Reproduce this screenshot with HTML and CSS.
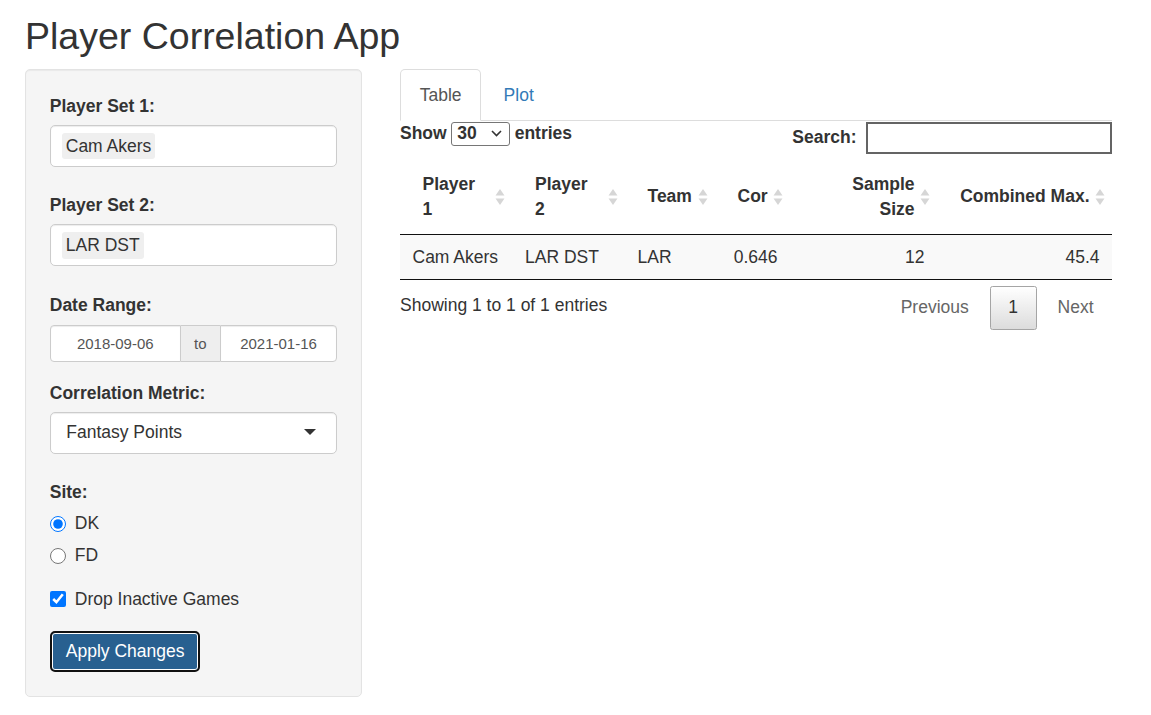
FILE: index.html
```html
<!DOCTYPE html>
<html lang="en">
<head>
<meta charset="utf-8">
<title>Player Correlation App</title>
<link rel="stylesheet" href="styles.css">
</head>
<body>
<div class="page">
  <h2 class="title">Player Correlation App</h2>
  <div class="layout">
    <aside class="well">
      <div class="group group-select">
        <label class="ctl-label">Player Set 1:</label>
        <div class="selectize"><span class="pill">Cam Akers</span></div>
      </div>
      <div class="group group-select group-select-last">
        <label class="ctl-label">Player Set 2:</label>
        <div class="selectize"><span class="pill">LAR DST</span></div>
      </div>
      <div class="group group-date">
        <label class="ctl-label">Date Range:</label>
        <div class="daterange">
          <div class="date-input date-first">2018-09-06</div>
          <div class="date-addon">to</div>
          <div class="date-input date-last">2021-01-16</div>
        </div>
      </div>
      <div class="group group-metric">
        <label class="ctl-label">Correlation Metric:</label>
        <div class="single-select"><span>Fantasy Points</span><span class="caret"></span></div>
      </div>
      <div class="group group-site">
        <label class="ctl-label">Site:</label>
        <label class="option-row"><input class="opt-input" type="radio" name="site" checked><span>DK</span></label>
        <label class="option-row option-second"><input class="opt-input" type="radio" name="site"><span>FD</span></label>
      </div>
      <div class="group group-check">
        <label class="option-row"><input class="opt-input" type="checkbox" checked><span>Drop Inactive Games</span></label>
      </div>
      <button class="apply-btn" type="button">Apply Changes</button>
    </aside>

    <main class="main">
      <ul class="tabs">
        <li class="tab tab-active">Table</li>
        <li class="tab tab-link">Plot</li>
      </ul>
      <div class="dt">
        <div class="dt-top">
          <div class="dt-length">
            <span>Show</span>
            <span class="len-select"><span>30</span><svg class="chev" width="11" height="7" viewBox="0 0 11 7"><path d="M1 1 L5.5 5.5 L10 1" fill="none" stroke="#333" stroke-width="1.6"/></svg></span>
            <span>entries</span>
          </div>
          <div class="dt-filter">
            <span>Search:</span>
            <span class="search-box"></span>
          </div>
        </div>
        <table class="dt-table">
          <colgroup>
            <col class="c1"><col class="c2"><col class="c3"><col class="c4"><col class="c5"><col class="c6">
          </colgroup>
          <thead>
            <tr>
              <th class="th-left">Player<br>1<svg class="sort" width="10" height="18" viewBox="0 0 10 18"><path d="M5 1 L9.5 7.5 H0.5 Z" fill="#d6d6d6"/><path d="M0.5 10.5 H9.5 L5 17 Z" fill="#d6d6d6"/></svg></th>
              <th class="th-left">Player<br>2<svg class="sort" width="10" height="18" viewBox="0 0 10 18"><path d="M5 1 L9.5 7.5 H0.5 Z" fill="#d6d6d6"/><path d="M0.5 10.5 H9.5 L5 17 Z" fill="#d6d6d6"/></svg></th>
              <th class="th-left">Team<svg class="sort" width="10" height="18" viewBox="0 0 10 18"><path d="M5 1 L9.5 7.5 H0.5 Z" fill="#d6d6d6"/><path d="M0.5 10.5 H9.5 L5 17 Z" fill="#d6d6d6"/></svg></th>
              <th class="th-right">Cor<svg class="sort" width="10" height="18" viewBox="0 0 10 18"><path d="M5 1 L9.5 7.5 H0.5 Z" fill="#d6d6d6"/><path d="M0.5 10.5 H9.5 L5 17 Z" fill="#d6d6d6"/></svg></th>
              <th class="th-right">Sample<br>Size<svg class="sort" width="10" height="18" viewBox="0 0 10 18"><path d="M5 1 L9.5 7.5 H0.5 Z" fill="#d6d6d6"/><path d="M0.5 10.5 H9.5 L5 17 Z" fill="#d6d6d6"/></svg></th>
              <th class="th-right">Combined Max.<svg class="sort" width="10" height="18" viewBox="0 0 10 18"><path d="M5 1 L9.5 7.5 H0.5 Z" fill="#d6d6d6"/><path d="M0.5 10.5 H9.5 L5 17 Z" fill="#d6d6d6"/></svg></th>
            </tr>
          </thead>
          <tbody>
            <tr>
              <td class="td-left">Cam Akers</td>
              <td class="td-left">LAR DST</td>
              <td class="td-left">LAR</td>
              <td class="td-right">0.646</td>
              <td class="td-right">12</td>
              <td class="td-right">45.4</td>
            </tr>
          </tbody>
        </table>
        <div class="dt-bottom">
          <div class="dt-info">Showing 1 to 1 of 1 entries</div>
          <div class="dt-paginate">
            <span class="pg pg-disabled">Previous</span>
            <span class="pg pg-current">1</span>
            <span class="pg pg-disabled">Next</span>
          </div>
        </div>
      </div>
    </main>
  </div>
</div>
</body>
</html>
```

FILE: styles.css
```css
* { box-sizing: border-box; }

html, body {
  margin: 0;
  padding: 0;
  background: #fff;
}

body {
  font-family: "Liberation Sans", Arial, Helvetica, sans-serif;
  font-size: 17.5px;
  line-height: 25px;
  color: #333;
}

.page {
  width: 1151px;
  padding-left: 25px;
}

.title {
  font-size: 37.5px;
  font-weight: 400;
  line-height: 41px;
  margin: 16px 0 12px;
  color: #333;
}

.layout {
  display: flex;
  align-items: flex-start;
  gap: 38px;
}

/* ---------- sidebar ---------- */
.well {
  width: 337px;
  background: #f5f5f5;
  border: 1px solid #e3e3e3;
  border-radius: 5px;
  box-shadow: inset 0 1px 1px rgba(0, 0, 0, 0.05);
  padding: 23.75px;
}

.ctl-label {
  display: block;
  font-weight: 700;
  line-height: 25px;
  margin-bottom: 6.25px;
}

.group-select { margin-bottom: 26px; }
.group-select-last { margin-bottom: 27px; }
.group-date { margin-bottom: 18.75px; }
.group-metric { margin-bottom: 26.5px; }
.group-site { margin-bottom: 18.5px; }
.group-check { margin-bottom: 19.25px; }

.selectize {
  height: 42px;
  background: #fff;
  border: 1px solid #ccc;
  border-radius: 5px;
  box-shadow: inset 0 1px 1px rgba(0, 0, 0, 0.075);
  padding: 0 11px;
  display: flex;
  align-items: center;
}

.pill {
  background: #efefef;
  color: #333;
  border-radius: 3px;
  padding: 1px 4px;
  line-height: 24.5px;
}

.daterange {
  display: flex;
  height: 37.5px;
}

.date-input {
  background: #fff;
  border: 1px solid #ccc;
  font-size: 15px;
  color: #555;
  display: flex;
  align-items: center;
  justify-content: center;
  box-shadow: inset 0 1px 1px rgba(0, 0, 0, 0.075);
}

.date-first {
  width: 131px;
  border-radius: 4px 0 0 4px;
}

.date-last {
  flex: 1;
  border-radius: 0 4px 4px 0;
}

.date-addon {
  width: 39px;
  background: #eee;
  border-top: 1px solid #ccc;
  border-bottom: 1px solid #ccc;
  font-size: 15px;
  color: #555;
  display: flex;
  align-items: center;
  justify-content: center;
}

.single-select {
  height: 41.5px;
  background: #fff;
  border: 1px solid #ccc;
  border-radius: 5px;
  box-shadow: inset 0 1px 1px rgba(0, 0, 0, 0.075);
  padding: 0 20px 0 15.5px;
  display: flex;
  align-items: center;
  justify-content: space-between;
}

.caret {
  width: 0;
  height: 0;
  border-left: 6.25px solid transparent;
  border-right: 6.25px solid transparent;
  border-top: 6.25px solid #333;
  margin-top: -1px;
}

.option-row {
  display: flex;
  align-items: center;
  gap: 9px;
  height: 25px;
  font-weight: 400;
}

.option-second { margin-top: 7px; }

.opt-input {
  width: 16px;
  height: 16px;
  margin: 0;
  flex: none;
}

.apply-btn {
  display: block;
  height: 41px;
  padding: 0 14px;
  font-family: inherit;
  font-size: 17.5px;
  line-height: 25px;
  color: #fff;
  background: #286090;
  border: 2px solid #111;
  border-radius: 5px;
  box-shadow: inset 0 0 0 1px #fff;
  cursor: pointer;
}

/* ---------- main ---------- */
.main {
  width: 712px;
}

.tabs {
  list-style: none;
  margin: 0;
  padding: 0;
  display: flex;
  border-bottom: 1px solid #ddd;
}

.tab {
  padding: 12.5px 18.75px;
  line-height: 25px;
  border: 1px solid transparent;
  border-radius: 5px 5px 0 0;
  margin-right: 2.5px;
  margin-bottom: -1px;
}

.tab-active {
  color: #555;
  background: #fff;
  border-color: #ddd #ddd transparent;
}

.tab-link {
  color: #337ab7;
}

.dt-top {
  display: flex;
  justify-content: space-between;
  align-items: flex-start;
  height: 38px;
}

.dt-length {
  display: flex;
  align-items: center;
  height: 25px;
  font-weight: 700;
}

.len-select {
  display: inline-flex;
  align-items: center;
  justify-content: space-between;
  width: 59px;
  height: 24px;
  margin: 0 5px 0 4px;
  padding: 0 6.5px 0 5.5px;
  border: 1px solid #767676;
  border-radius: 3px;
  background: #fff;
  font-weight: 700;
}

.chev { display: block; }

.dt-filter {
  display: flex;
  align-items: center;
  height: 32px;
  margin-top: 0.5px;
  font-weight: 700;
}

.search-box {
  display: block;
  width: 246px;
  height: 32px;
  margin-left: 9.5px;
  border: 2px solid #646464;
  background: #fff;
}

.dt-table {
  width: 712px;
  table-layout: fixed;
  border-collapse: separate;
  border-spacing: 0;
  border-bottom: 1px solid #111;
}

.c1 { width: 112.5px; }
.c2 { width: 112.5px; }
.c3 { width: 90px; }
.c4 { width: 75px; }
.c5 { width: 147px; }
.c6 { width: 175px; }

.dt-table th {
  position: relative;
  font-weight: 700;
  padding: 12.5px 22.5px;
  line-height: 25px;
  vertical-align: middle;
  border-bottom: 1px solid #111;
}

.th-left { text-align: left; }
.th-right { text-align: right; }

.sort {
  position: absolute;
  right: 7.5px;
  top: 50%;
  margin-top: -9px;
}

.dt-table td {
  padding: 9.5px 12.5px;
  line-height: 25px;
  background: #f9f9f9;
}

.td-left { text-align: left; }
.td-right { text-align: right; }

.dt-bottom {
  display: flex;
  justify-content: space-between;
  align-items: flex-start;
}

.dt-info {
  padding-top: 13.2px;
}

.dt-paginate {
  display: flex;
  padding-top: 5.5px;
}

.pg {
  display: block;
  padding: 8.75px 17.5px;
  line-height: 25px;
  border: 1px solid transparent;
  border-radius: 2.5px;
  margin-left: 2.5px;
}

.pg-disabled {
  color: #666;
}

.pg-current {
  color: #333;
  border-color: #a5a5a5;
  background: linear-gradient(to bottom, #fff 0%, #dcdcdc 100%);
}
```
